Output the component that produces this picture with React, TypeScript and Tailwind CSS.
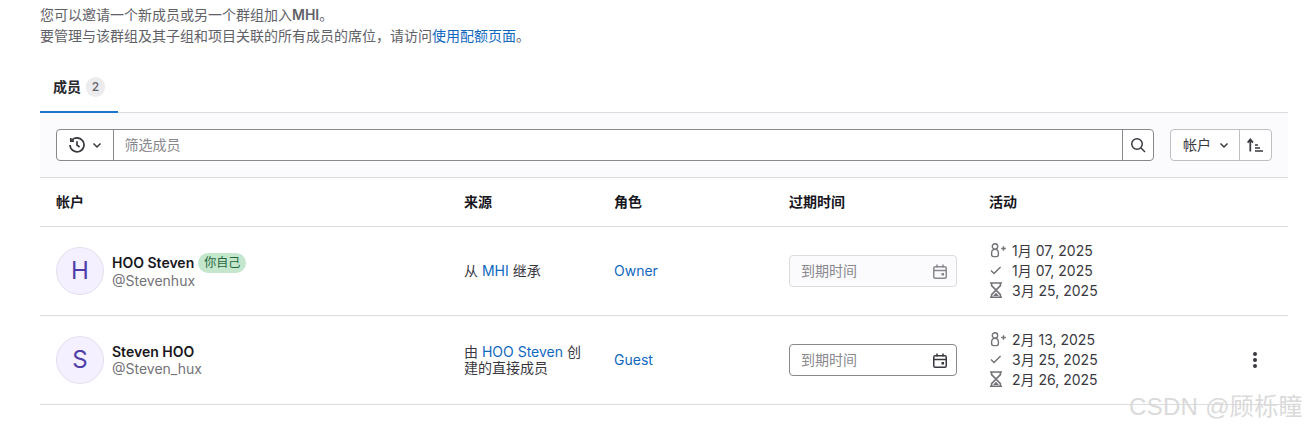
import React from "react";

const font = { fontFamily: '"Inter","Noto Sans CJK SC",sans-serif' };

function UserAdd() {
  return (
    <svg width="18" height="16" viewBox="0 0 18 16" fill="none" className="shrink-0">
      <circle cx="6" cy="4.400" r="2.700" stroke="#737278" strokeWidth="1.400" />
      <path d="M2.600 11c0-2 1.400-3.600 3.400-3.600s3.400 1.600 3.400 3.600v1.600c0 1.200-.8 2-1.900 2H4.500c-1.100 0-1.900-.8-1.900-2V11z" stroke="#737278" strokeWidth="1.400" />
      <path d="M12.200 6.500h4.600M14.500 4.200v4.600" stroke="#737278" strokeWidth="1.400" />
    </svg>
  );
}
function Check() {
  return (
    <svg width="18" height="16" viewBox="0 0 18 16" fill="none" className="shrink-0">
      <path d="M2 8.600l3 3 6.600-6.600" stroke="#737278" strokeWidth="1.400" />
    </svg>
  );
}
function Hourglass() {
  return (
    <svg width="18" height="16" viewBox="0 0 18 16" fill="none" className="shrink-0">
      <path d="M1 1h12M1 15.200h12M2.600 1v2.600L7 8.100l4.400-4.500V1M2.600 15.200v-2.600L7 8.100l4.400 4.500v2.600" stroke="#737278" strokeWidth="1.600" />
      <path d="M4 14L7 10.800 10 14z" fill="#737278" />
    </svg>
  );
}
function Calendar({ color }: { color: string }) {
  return (
    <svg width="14" height="15" viewBox="0 0 14 15" fill="none">
      <rect x="0.750" y="2.750" width="12.500" height="11.500" rx="1.500" stroke={color} strokeWidth="1.500" />
      <path d="M1 6.500h12" stroke={color} strokeWidth="1.500" />
      <path d="M4 0.500v3M10 0.500v3" stroke={color} strokeWidth="1.500" />
      <rect x="8.500" y="9" width="2.500" height="2.500" fill={color} />
    </svg>
  );
}
function Chevron() {
  return (
    <svg width="10" height="7" viewBox="0 0 10 7" fill="none">
      <path d="M1.500 1.500L5 5l3.500-3.500" stroke="#3a383f" strokeWidth="1.500" />
    </svg>
  );
}
function Clock() {
  return (
    <svg width="16" height="16" viewBox="0 0 16 16" fill="none">
      <path d="M2.400 3.600A7 7 0 1 1 1 8" stroke="#3a383f" strokeWidth="1.700" />
      <path d="M1.800 1v3.200H5" stroke="#3a383f" strokeWidth="1.700" />
      <path d="M8 4.200V8l2.600 2.200" stroke="#3a383f" strokeWidth="1.700" />
    </svg>
  );
}
function Search() {
  return (
    <svg width="16" height="16" viewBox="0 0 16 16" fill="none">
      <circle cx="7" cy="7" r="5.250" stroke="#3a383f" strokeWidth="1.500" />
      <path d="M11 11l4 4" stroke="#3a383f" strokeWidth="1.500" />
    </svg>
  );
}
function SortIcon() {
  return (
    <svg width="17" height="14" viewBox="0 0 17 14" fill="none">
      <path d="M3.300 13.500V2M.6 4.600l2.700-3.200L6 4.600" stroke="#3a383f" strokeWidth="1.700" />
      <path d="M8 7h3M8 10h5M8 13h8" stroke="#3a383f" strokeWidth="1.400" />
    </svg>
  );
}

function DateRow({ icon, text }: { icon: React.ReactNode; text: string }) {
  return (
    <div className="flex h-5 items-center">
      <span className="flex w-[23px] shrink-0 items-center">{icon}</span>
      <span className="whitespace-nowrap text-[14px] text-[#3a383f]">{text}</span>
    </div>
  );
}

function Row(props: {
  initial: string;
  name: string;
  handle: string;
  self?: boolean;
  source: React.ReactNode;
  role: string;
  disabled?: boolean;
  dates: string[];
  menu?: boolean;
}) {
  return (
    <div className="grid h-[89px] grid-cols-[408px_150px_175px_200px_1fr] items-center border-b border-[#dcdcde]">
      <div className="flex items-center pl-4">
        <div className="flex h-12 w-12 items-center justify-center rounded-full border border-[#e3dfee] bg-[#f4f0ff] text-[24px] text-[#4f3ea8]">
          {props.initial}
        </div>
        <div className="ml-2 flex flex-col">
          <div className={"flex items-center " + (props.self ? "h-[20px]" : "h-[18px]")}>
            <span className="pb-[2px] text-[14px] font-semibold text-[#18171d]">{props.name}</span>
            {props.self && (
              <span className="ml-1 flex h-5 w-12 items-center justify-center rounded-full bg-[#c3e6cd] text-[12px] text-[#24663b]">
                你自己
              </span>
            )}
          </div>
          <span className="text-[14px] leading-[16px] text-[#737278]">{props.handle}</span>
        </div>
      </div>
      <div className="w-[134px] pl-4 text-[14px] leading-[16px] text-[#3a383f]">{props.source}</div>
      <div className="pb-[2px] pl-4 text-[14px] text-[#1068bf]">{props.role}</div>
      <div className="pl-4">
        <div
          className={
            "flex h-8 w-[168px] items-center justify-between rounded border pl-[11px] pr-[9px] text-[14px] text-[#89888d] " +
            (props.disabled ? "border-[#dcdcde] bg-[#fbfafd]" : "border-[#89888d] bg-white")
          }
        >
          <span className="pb-[2px]">到期时间</span>
          <Calendar color={props.disabled ? "#89888d" : "#3a383f"} />
        </div>
      </div>
      <div className="flex items-center justify-between pr-[31px] pl-4">
        <div className="flex flex-col pb-[2px]">
          <DateRow icon={<UserAdd />} text={props.dates[0]} />
          <DateRow icon={<Check />} text={props.dates[1]} />
          <DateRow icon={<Hourglass />} text={props.dates[2]} />
        </div>
        {props.menu && (
          <div className="flex flex-col gap-[2px]">
            <span className="h-1 w-1 rounded-full bg-[#3a383f]" />
            <span className="h-1 w-1 rounded-full bg-[#3a383f]" />
            <span className="h-1 w-1 rounded-full bg-[#3a383f]" />
          </div>
        )}
      </div>
    </div>
  );
}

export default function App() {
  return (
    <div className="relative h-[429px] w-[1306px] overflow-hidden bg-white pl-10 pr-[18px] pt-1" style={font}>
      <div className="text-[14px] leading-[21px] text-[#626168]">
        <p>
          您可以邀请一个新成员或另一个群组加入<b className="font-semibold">MHI</b>。
        </p>
        <p>
          要管理与该群组及其子组和项目关联的所有成员的席位，请访问<span className="text-[#1068bf]">使用配额页面</span>。
        </p>
      </div>

      <div className="mt-[18px] flex h-[49px] border-b border-[#dcdcde]">
        <div className="flex h-[49px] w-[78px] items-center justify-center gap-[5px] border-b-2 border-[#1f75cb] pb-[2px]">
          <span className="text-[14px] font-semibold text-[#28272d]">成员</span>
          <span className="flex h-5 w-[19px] items-center justify-center rounded-full bg-[#ececef] text-[12px] font-medium text-[#626168]">2</span>
        </div>
      </div>

      <div className="flex h-[65px] items-center gap-4 border-b border-[#dcdcde] bg-[#fbfafd] px-4">
        <div className="flex h-8 flex-1 rounded border border-[#89888d] bg-white">
          <div className="flex w-[57px] items-center justify-center gap-[7px] border-r border-[#89888d]">
            <Clock />
            <Chevron />
          </div>
          <div className="flex flex-1 items-center pb-[2px] pl-[10.500px] text-[14px] text-[#89888d]">筛选成员</div>
          <div className="flex w-[31px] items-center justify-center border-l border-[#89888d]">
            <Search />
          </div>
        </div>
        <div className="flex h-8 rounded border border-[#bfbfc3] bg-white">
          <div className="flex w-[69px] items-center justify-start gap-2 border-r border-[#bfbfc3] pl-3 text-[14px] text-[#3a383f]">
            <span className="pb-[2px]">帐户</span>
            <Chevron />
          </div>
          <div className="flex w-[31px] items-center justify-center">
            <SortIcon />
          </div>
        </div>
      </div>

      <div className="grid h-[49px] grid-cols-[408px_150px_175px_200px_1fr] items-center border-b border-[#dcdcde] pb-[2px] text-[14px] font-semibold text-[#18171d]">
        <div className="pl-4">帐户</div>
        <div className="pl-4">来源</div>
        <div className="pl-4">角色</div>
        <div className="pl-4">过期时间</div>
        <div className="pl-4">活动</div>
      </div>

      <Row
        initial="H"
        name="HOO Steven"
        handle="@Stevenhux"
        self
        source={
          <>
            从 <span className="text-[#1068bf]">MHI</span> 继承
          </>
        }
        role="Owner"
        disabled
        dates={["1月 07, 2025", "1月 07, 2025", "3月 25, 2025"]}
      />
      <Row
        initial="S"
        name="Steven HOO"
        handle="@Steven_hux"
        source={
          <>
            由 <span className="text-[#1068bf]">HOO Steven</span> 创建的直接成员
          </>
        }
        role="Guest"
        dates={["2月 13, 2025", "3月 25, 2025", "2月 26, 2025"]}
        menu
      />

      <div className="absolute left-[1129px] top-[391px] whitespace-nowrap font-['Liberation_Sans','Noto_Sans_CJK_SC',sans-serif] text-[24px] leading-[32px] tracking-[0.3px] text-[#dadada]">
        CSDN @顾栎瞳
      </div>
    </div>
  );
}
